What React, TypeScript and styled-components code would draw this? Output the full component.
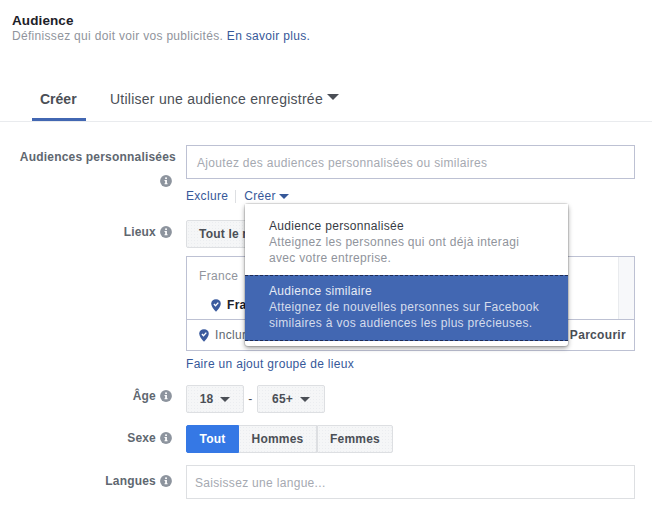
import React from "react";
import styled, { createGlobalStyle } from "styled-components";

const Global = createGlobalStyle`
  html, body { margin: 0; padding: 0; background: #fff; }
  body { width: 652px; height: 516px; overflow: hidden; font-family: "Liberation Sans", Arial, sans-serif; }
`;

const Page = styled.div`
  width: 652px;
  height: 516px;
  overflow: hidden;
  font-size: 12px;
  letter-spacing: 0.31px;
  color: #4b4f56;
`;

const Header = styled.header`
  padding: 12px 12px 0;
  height: 68px;
  box-sizing: border-box;
`;

const Title = styled.h2`
  margin: 0;
  font-size: 13.5px;
  letter-spacing: 0.1px;
  line-height: 17px;
  font-weight: 700;
  color: #1d2129;
`;

const Subtitle = styled.p`
  margin: 0;
  font-size: 12px;
  line-height: 15px;
  color: #90949c;
`;

const Link = styled.a`
  color: #365899;
`;

const Tabs = styled.nav`
  display: flex;
  height: 54px;
  padding-left: 32px;
  border-bottom: 1px solid #e9ebee;
  box-sizing: border-box;
  font-size: 14px;
  letter-spacing: 0.25px;
`;

const Tab = styled.div<{ $active?: boolean }>`
  display: flex;
  align-items: center;
  gap: 4px;
  box-sizing: border-box;
  width: ${(p) => (p.$active ? "54px" : "auto")};
  height: 53px;
  padding: 14px ${(p) => (p.$active ? "8px" : "0")} 3px;
  margin-right: ${(p) => (p.$active ? "24px" : "0")};
  font-weight: ${(p) => (p.$active ? 700 : 400)};
  letter-spacing: ${(p) => (p.$active ? "0" : "0.25px")};
  color: #4b4f56;
  border-bottom: 3px solid ${(p) => (p.$active ? "#4267b2" : "transparent")};
`;

const Form = styled.div`
  display: flex;
  flex-direction: column;
  padding: 23px 17px 0 0;
`;

const Row = styled.div<{ $gap?: number }>`
  display: grid;
  grid-template-columns: 176px 449px;
  column-gap: 10px;
  margin-bottom: ${(p) => p.$gap ?? 0}px;
`;

const Label = styled.div<{ $pad?: number; $inset?: number }>`
  font-weight: 700;
  font-size: 12px;
  letter-spacing: 0.2px;
  line-height: 16px;
  color: #606770;
  text-align: right;
  padding-top: ${(p) => p.$pad ?? 4}px;
  padding-right: ${(p) => p.$inset ?? 4}px;
`;

const LabelIcon = styled.span`
  display: inline-block;
  vertical-align: -2px;
  margin-left: 4px;
  line-height: 0;
`;

const TallIcon = styled.div`
  line-height: 0;
  margin-top: 10px;
  padding-right: 4px;
`;

const Field = styled.div`
  position: relative;
  min-width: 0;
`;

const Input = styled.div<{ $c?: string; $indent?: number }>`
  box-sizing: border-box;
  height: 34px;
  border: 1px solid ${(p) => p.$c ?? "#bdc1d3"};
  padding: 1px 0 0 ${(p) => p.$indent ?? 10}px;
  display: flex;
  align-items: center;
  color: #a5a9b1;
  font-size: 12px;
  background: #fff;
`;

const LinkRow = styled.div`
  display: flex;
  align-items: center;
  height: 16px;
  margin-top: 9px;
  margin-bottom: 16px;
  color: #365899;
`;

const Sep = styled.span`
  width: 1px;
  height: 13px;
  background: #dddfe2;
  margin: 0 8px 0 7px;
`;

const Caret = styled.span<{ $c?: string; $w?: number; $lift?: number }>`
  display: inline-block;
  width: 0;
  height: 0;
  margin-bottom: ${(p) => p.$lift ?? 0}px;
  border-left: ${(p) => p.$w ?? 5}px solid transparent;
  border-right: ${(p) => p.$w ?? 5}px solid transparent;
  border-top: ${(p) => p.$w ?? 5}px solid ${(p) => p.$c ?? "#4b4f56"};
`;

const Btn = styled.div<{ $w?: number; $on?: boolean }>`
  box-sizing: border-box;
  height: 28px;
  width: ${(p) => (p.$w ? `${p.$w}px` : "auto")};
  display: flex;
  align-items: center;
  justify-content: center;
  gap: 7px;
  background-color: ${(p) => (p.$on ? "#3578e5" : "#f5f6f7")};
  background-image: ${(p) => (p.$on ? "none" : "radial-gradient(#ebedf0 0.6px, transparent 0.8px)")};
  background-size: 3px 3px;
  color: ${(p) => (p.$on ? "#fff" : "#4b4f56")};
  border: 1px solid ${(p) => (p.$on ? "#3578e5" : "#dddfe2")};
  font-weight: 700;
  font-size: 12px;
  letter-spacing: 0.2px;
  border-radius: 2px;
`;

const LocationBtn = styled(Btn)`
  justify-content: flex-start;
  padding-left: 12px;
  width: 120px;
  margin-bottom: 8px;
`;

const LocationBox = styled.div`
  box-sizing: border-box;
  height: 95px;
  border: 1px solid #bdc1d3;
  display: flex;
  flex-direction: column;
`;

const LocationTop = styled.div`
  flex: 1;
  display: flex;
  justify-content: space-between;
  border-bottom: 1px solid #bdc1d3;
`;

const LocationList = styled.div`
  padding: 11px 0 0 12px;
  color: #90949c;
  line-height: 16px;
`;

const Country = styled.div`
  display: flex;
  align-items: center;
  gap: 6px;
  margin: 13px 0 0 12px;
  color: #1d2129;
  font-weight: 700;
`;

const Scrollbar = styled.div`
  width: 15px;
  background: #f7f8fa;
  border-left: 1px solid #e9ebee;
`;

const LocationBottom = styled.div`
  height: 30px;
  display: flex;
  align-items: center;
  justify-content: space-between;
  padding: 0 8px 0 12px;
  color: #606770;
`;

const Include = styled.span`
  display: flex;
  align-items: center;
  gap: 6px;
`;

const Browse = styled.span`
  font-weight: 700;
  color: #4b4f56;
`;

const BulkLink = styled.div`
  height: 16px;
  margin: 5px 0 13px;
  color: #365899;
  line-height: 16px;
`;

const AgeGroup = styled.div`
  display: flex;
  align-items: center;
  height: 28px;
`;

const Dash = styled.span`
  width: 13px;
  text-align: center;
  color: #4b4f56;
`;

const Segment = styled.div`
  display: flex;
  height: 28px;
`;

const SegBtn = styled(Btn)`
  border-radius: 0;
  border-left-width: ${(p) => (p.$on ? 1 : 0)}px;
  &:first-child { border-radius: 2px 0 0 2px; }
  &:last-child { border-radius: 0 2px 2px 0; border-left-width: 1px; }
`;

const Menu = styled.div`
  position: absolute;
  left: 59px;
  top: 59px;
  z-index: 5;
  width: 323px;
  height: 142px;
  box-sizing: border-box;
  padding-bottom: 5px;
  background: #fff;
  border-radius: 3px;
  box-shadow: 0 0 0 1px rgba(0, 0, 0, 0.1), 0 2px 5px rgba(0, 0, 0, 0.4);
`;

const MenuItem = styled.div<{ $on?: boolean; $h: number; $pt: number }>`
  box-sizing: border-box;
  height: ${(p) => p.$h}px;
  padding: ${(p) => p.$pt}px 20px 0 24px;
  background: ${(p) => (p.$on ? "#4267b2" : "#fff")};
  border-top: ${(p) => (p.$on ? "1px dashed #1d2b55" : "none")};
  border-bottom: ${(p) => (p.$on ? "1px dashed #1d2b55" : "none")};
  line-height: 16px;
  font-size: 12px;
  color: ${(p) => (p.$on ? "#d5dcec" : "#90949c")};
`;

const MenuTitle = styled.div<{ $on?: boolean }>`
  color: ${(p) => (p.$on ? "#e6ebf5" : "#373b44")};
`;

const Info = () => (
  <svg width="12" height="12" viewBox="0 0 13 13">
    <circle cx="6.5" cy="6.5" r="6.4" fill="#8d949e" />
    <rect x="5.6" y="2.6" width="1.9" height="1.8" fill="#fff" />
    <path d="M4.9 5.4h2.6v3.6h.7v1H4.9V9h.7V6.4h-.7z" fill="#fff" />
  </svg>
);

const Pin = () => (
  <svg width="10" height="13" viewBox="0 0 10 13">
    <path d="M5 0.3 C7.8 0.3 9.8 2 9.8 4.8 C9.8 7.6 7 10.6 5 12.7 C3 10.6 0.2 7.6 0.2 4.8 C0.2 2 2.2 0.3 5 0.3 Z" fill="#3b5b9e" />
    <path d="M2.9 5 L4.5 6.7 L7.3 3.6" fill="none" stroke="#fff" strokeWidth="1.3" />
  </svg>
);

export default function App() {
  return (
    <Page>
      <Global />
      <Header>
        <Title>Audience</Title>
        <Subtitle>
          Définissez qui doit voir vos publicités. <Link>En savoir plus.</Link>
        </Subtitle>
      </Header>
      <Tabs>
        <Tab $active>Créer</Tab>
        <Tab>
          Utiliser une audience enregistrée <Caret $w={6} $lift={4} />
        </Tab>
      </Tabs>
      <Form>
        <Row>
          <Label $pad={4} $inset={0}>
            Audiences personnalisées
            <TallIcon>
              <Info />
            </TallIcon>
          </Label>
          <Field>
            <Input>Ajoutez des audiences personnalisées ou similaires</Input>
            <LinkRow>
              Exclure
              <Sep />
              Créer&nbsp;
              <Caret $c="#365899" />
            </LinkRow>
            <Menu>
              <MenuItem $h={71} $pt={14}>
                <MenuTitle>Audience personnalisée</MenuTitle>
                Atteignez les personnes qui ont déjà interagi
                <br />
                avec votre entreprise.
              </MenuItem>
              <MenuItem $on $h={66} $pt={7}>
                <MenuTitle $on>Audience similaire</MenuTitle>
                Atteignez de nouvelles personnes sur Facebook
                <br />
                similaires à vos audiences les plus précieuses.
              </MenuItem>
            </Menu>
          </Field>
        </Row>
        <Row>
          <Label $pad={4}>
            Lieux
            <LabelIcon>
              <Info />
            </LabelIcon>
          </Label>
          <Field>
            <LocationBtn>Tout le monde</LocationBtn>
            <LocationBox>
              <LocationTop>
                <LocationList>
                  France
                  <Country>
                    <Pin />
                    France
                  </Country>
                </LocationList>
                <Scrollbar />
              </LocationTop>
              <LocationBottom>
                <Include>
                  <Pin />
                  Inclure
                </Include>
                <Browse>Parcourir</Browse>
              </LocationBottom>
            </LocationBox>
            <BulkLink>Faire un ajout groupé de lieux</BulkLink>
          </Field>
        </Row>
        <Row $gap={12}>
          <Label $pad={3}>
            Âge
            <LabelIcon>
              <Info />
            </LabelIcon>
          </Label>
          <AgeGroup>
            <Btn $w={58}>
              18 <Caret />
            </Btn>
            <Dash>-</Dash>
            <Btn $w={68}>
              65+ <Caret />
            </Btn>
          </AgeGroup>
        </Row>
        <Row $gap={12}>
          <Label $pad={5}>
            Sexe
            <LabelIcon>
              <Info />
            </LabelIcon>
          </Label>
          <Segment>
            <SegBtn $w={53} $on>
              Tout
            </SegBtn>
            <SegBtn $w={78}>Hommes</SegBtn>
            <SegBtn $w={76}>Femmes</SegBtn>
          </Segment>
        </Row>
        <Row>
          <Label $pad={8}>
            Langues
            <LabelIcon>
              <Info />
            </LabelIcon>
          </Label>
          <Input $c="#dddfe2" $indent={8}>
            Saisissez une langue...
          </Input>
        </Row>
      </Form>
    </Page>
  );
}
